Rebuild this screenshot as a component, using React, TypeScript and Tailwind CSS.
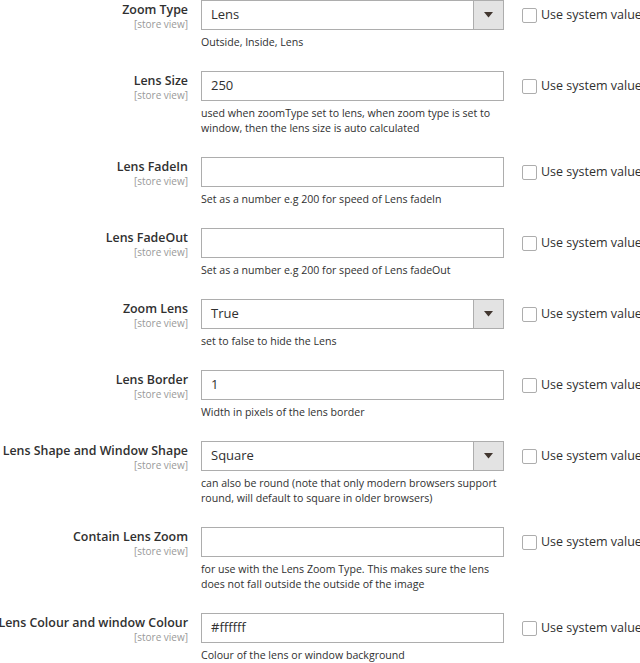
import React from "react";

type Row = {
  label: string;
  value: string;
  select?: boolean;
  note: string[];
};

const rows: Row[] = [
  { label: "Zoom Type", value: "Lens", select: true, note: ["Outside, Inside, Lens"] },
  {
    label: "Lens Size",
    value: "250",
    note: ["used when zoomType set to lens, when zoom type is set to", "window, then the lens size is auto calculated"],
  },
  { label: "Lens FadeIn", value: "", note: ["Set as a number e.g 200 for speed of Lens fadeIn"] },
  { label: "Lens FadeOut", value: "", note: ["Set as a number e.g 200 for speed of Lens fadeOut"] },
  { label: "Zoom Lens", value: "True", select: true, note: ["set to false to hide the Lens"] },
  { label: "Lens Border", value: "1", note: ["Width in pixels of the lens border"] },
  {
    label: "Lens Shape and Window Shape",
    value: "Square",
    select: true,
    note: ["can also be round (note that only modern browsers support", "round, will default to square in older browsers)"],
  },
  {
    label: "Contain Lens Zoom",
    value: "",
    note: ["for use with the Lens Zoom Type. This makes sure the lens", "does not fall outside the outside of the image"],
  },
  { label: "Lens Colour and window Colour", value: "#ffffff", note: ["Colour of the lens or window background"] },
];

function Field({ row }: { row: Row }) {
  return (
    <div className="grid grid-cols-[188px_303px_1fr] gap-x-0 pb-[21px]">
      <div className="flex flex-col items-end text-right whitespace-nowrap">
        <span className="text-[12.4px] leading-[18px] font-semibold text-[#303030] pt-[1px]">{row.label}</span>
        <span className="text-[10px] leading-[12px] text-[#999999] -mt-[1px]">[store view]</span>
      </div>
      <div className="ml-[13px] w-[303px] flex flex-col">
        <div className="relative h-[30px] w-[303px] border border-[#adadad] bg-white flex items-center">
          <span className="pl-[9px] text-[13px] text-[#303030]">{row.value}</span>
          {row.select && (
            <div className="absolute right-0 top-0 h-full w-[30px] border-l border-[#adadad] bg-[#e3e3e3] flex items-center justify-center">
              <svg width="9" height="6" viewBox="0 0 9 6">
                <path d="M0 0 L9 0 L4.5 5.5 Z" fill="#41362f" />
              </svg>
            </div>
          )}
        </div>
        <div className="pt-[5px] text-[10.6px] leading-[15px] text-[#303030] w-[310px]">
          {row.note.map((n, i) => (
            <div key={i} className="whitespace-nowrap">{n}</div>
          ))}
        </div>
      </div>
      <div className="ml-[31px] h-[30px] flex items-center whitespace-nowrap">
        <span className="inline-block w-[15px] h-[15px] border border-[#adadad] rounded-[2px] bg-white mr-[4px]" />
        <span className="text-[12.5px] text-[#303030]">Use system value</span>
      </div>
    </div>
  );
}

export default function App() {
  return (
    <div className="w-[640px] h-[663px] overflow-hidden bg-white" style={{ fontFamily: '"Open Sans", "Noto Sans", sans-serif' }}>
      {rows.map((r, i) => (
        <Field key={i} row={r} />
      ))}
    </div>
  );
}
